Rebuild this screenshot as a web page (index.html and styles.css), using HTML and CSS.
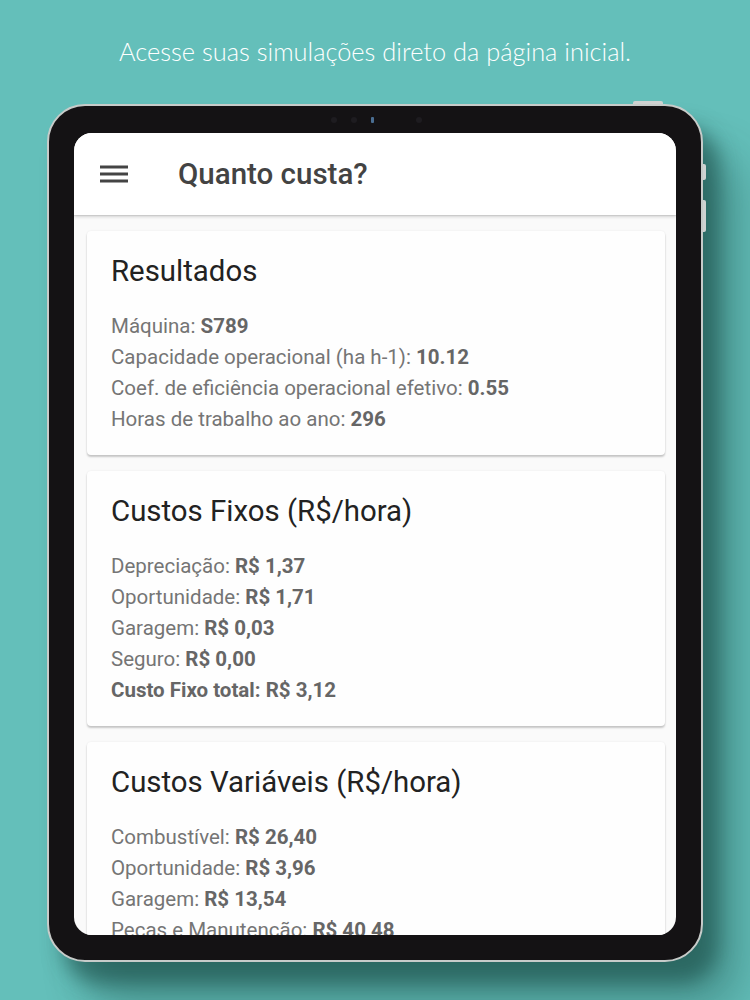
FILE: index.html
```html
<!DOCTYPE html>
<html lang="pt-BR">
<head>
<meta charset="utf-8">
<title>Quanto custa?</title>
<link rel="stylesheet" href="styles.css">
</head>
<body>
<div class="stage">
  <p class="caption">Acesse suas simulações direto da página inicial.</p>
  <div class="tablet">
    <span class="btn-top"></span>
    <span class="btn-side btn-side-1"></span>
    <span class="btn-side btn-side-2"></span>
    <div class="camera">
      <span class="dot"></span><span class="dot"></span><span class="dot lens"></span><span class="dot far"></span>
    </div>
    <div class="screen">
      <header class="appbar">
        <svg class="menu" width="28" height="20" viewBox="0 0 28 20" aria-hidden="true">
          <rect x="0" y="1.5" width="28" height="3" fill="#444"/>
          <rect x="0" y="8.5" width="28" height="3" fill="#444"/>
          <rect x="0" y="15.5" width="28" height="3" fill="#444"/>
        </svg>
        <h1 class="apptitle">Quanto custa?</h1>
      </header>
      <main class="content">
        <section class="card">
          <h2 class="card-title">Resultados</h2>
          <ul class="list">
            <li>Máquina: <b>S789</b></li>
            <li>Capacidade operacional (ha h-1): <b>10.12</b></li>
            <li>Coef. de eficiência operacional efetivo: <b>0.55</b></li>
            <li>Horas de trabalho ao ano: <b>296</b></li>
          </ul>
        </section>
        <section class="card">
          <h2 class="card-title">Custos Fixos (R$/hora)</h2>
          <ul class="list">
            <li>Depreciação: <b>R$ 1,37</b></li>
            <li>Oportunidade: <b>R$ 1,71</b></li>
            <li>Garagem: <b>R$ 0,03</b></li>
            <li>Seguro: <b>R$ 0,00</b></li>
            <li><b>Custo Fixo total: R$ 3,12</b></li>
          </ul>
        </section>
        <section class="card">
          <h2 class="card-title">Custos Variáveis (R$/hora)</h2>
          <ul class="list">
            <li>Combustível: <b>R$ 26,40</b></li>
            <li>Oportunidade: <b>R$ 3,96</b></li>
            <li>Garagem: <b>R$ 13,54</b></li>
            <li>Peças e Manutenção: <b>R$ 40,48</b></li>
          </ul>
        </section>
      </main>
    </div>
  </div>
</div>
</body>
</html>
```

FILE: styles.css
```css
html, body {
  margin: 0;
  padding: 0;
}
body {
  width: 750px;
  height: 1000px;
  overflow: hidden;
  background: #64bfba;
  font-family: Roboto, "Liberation Sans", sans-serif;
}
.stage {
  display: flex;
  flex-direction: column;
  align-items: flex-start;
  height: 1000px;
}
.caption {
  margin: 36px 0 0 0;
  align-self: stretch;
  text-align: center;
  font-family: Lato, "Open Sans", sans-serif;
  font-weight: 300;
  font-size: 25.4px;
  line-height: 30px;
  color: #ffffff;
}
.tablet {
  position: relative;
  margin: 38px 0 0 47px;
  width: 652px;
  height: 854px;
  box-sizing: content-box;
  border: 2px solid #c7cbc9;
  border-radius: 38px;
  background: #141214;
  box-shadow: 16px 22px 20px rgba(20, 65, 60, 0.55), 40px 50px 44px rgba(20, 65, 60, 0.3);
  display: flex;
  flex-direction: column;
  align-items: center;
}
.btn-top {
  position: absolute;
  top: -5px;
  right: 38px;
  width: 30px;
  height: 3px;
  background: #cfd2d1;
  border-radius: 2px 2px 0 0;
}
.btn-side {
  position: absolute;
  right: -5px;
  width: 3px;
  background: #cfd2d1;
  border-radius: 0 2px 2px 0;
}
.btn-side-1 { top: 58px; height: 16px; }
.btn-side-2 { top: 94px; height: 32px; }
.camera {
  height: 27px;
  display: flex;
  align-items: center;
  gap: 14px;
  margin-left: 2px;
}
.dot {
  width: 6px;
  height: 6px;
  border-radius: 50%;
  background: #1e1c20;
}
.dot.lens {
  width: 3px;
  height: 6px;
  border-radius: 1px;
  background: #4a6e92;
}
.dot.far {
  margin-left: 28px;
}
.screen {
  width: 602px;
  height: 802px;
  background: #fafafa;
  border-radius: 18px;
  overflow: hidden;
  display: flex;
  flex-direction: column;
}
.appbar {
  flex: 0 0 82px;
  height: 82px;
  background: #ffffff;
  display: flex;
  align-items: center;
  padding-left: 26px;
  box-shadow: 0 2px 3px rgba(0, 0, 0, 0.14), 0 1px 1px rgba(0, 0, 0, 0.08);
  position: relative;
  z-index: 1;
}
.menu {
  display: block;
}
.apptitle {
  margin: 0 0 0 50px;
  font-size: 29.5px;
  font-weight: 500;
  color: #434343;
}
.content {
  padding: 16px 11px 0 13px;
  display: flex;
  flex-direction: column;
  gap: 16px;
}
.card {
  background: #fefefe;
  border-radius: 4px;
  padding: 24px 24px 20px 24px;
  box-shadow: 0 2px 2px rgba(0, 0, 0, 0.2), 0 0 2px rgba(0, 0, 0, 0.08);
}
.card-title {
  margin: 0;
  font-size: 29.4px;
  line-height: 32px;
  font-weight: 400;
  color: #222222;
}
.list {
  list-style: none;
  margin: 24px 0 0 0;
  padding: 0;
  font-size: 20.5px;
  line-height: 31px;
  color: #757575;
}
.list b {
  font-weight: 700;
  color: #666666;
}
```
